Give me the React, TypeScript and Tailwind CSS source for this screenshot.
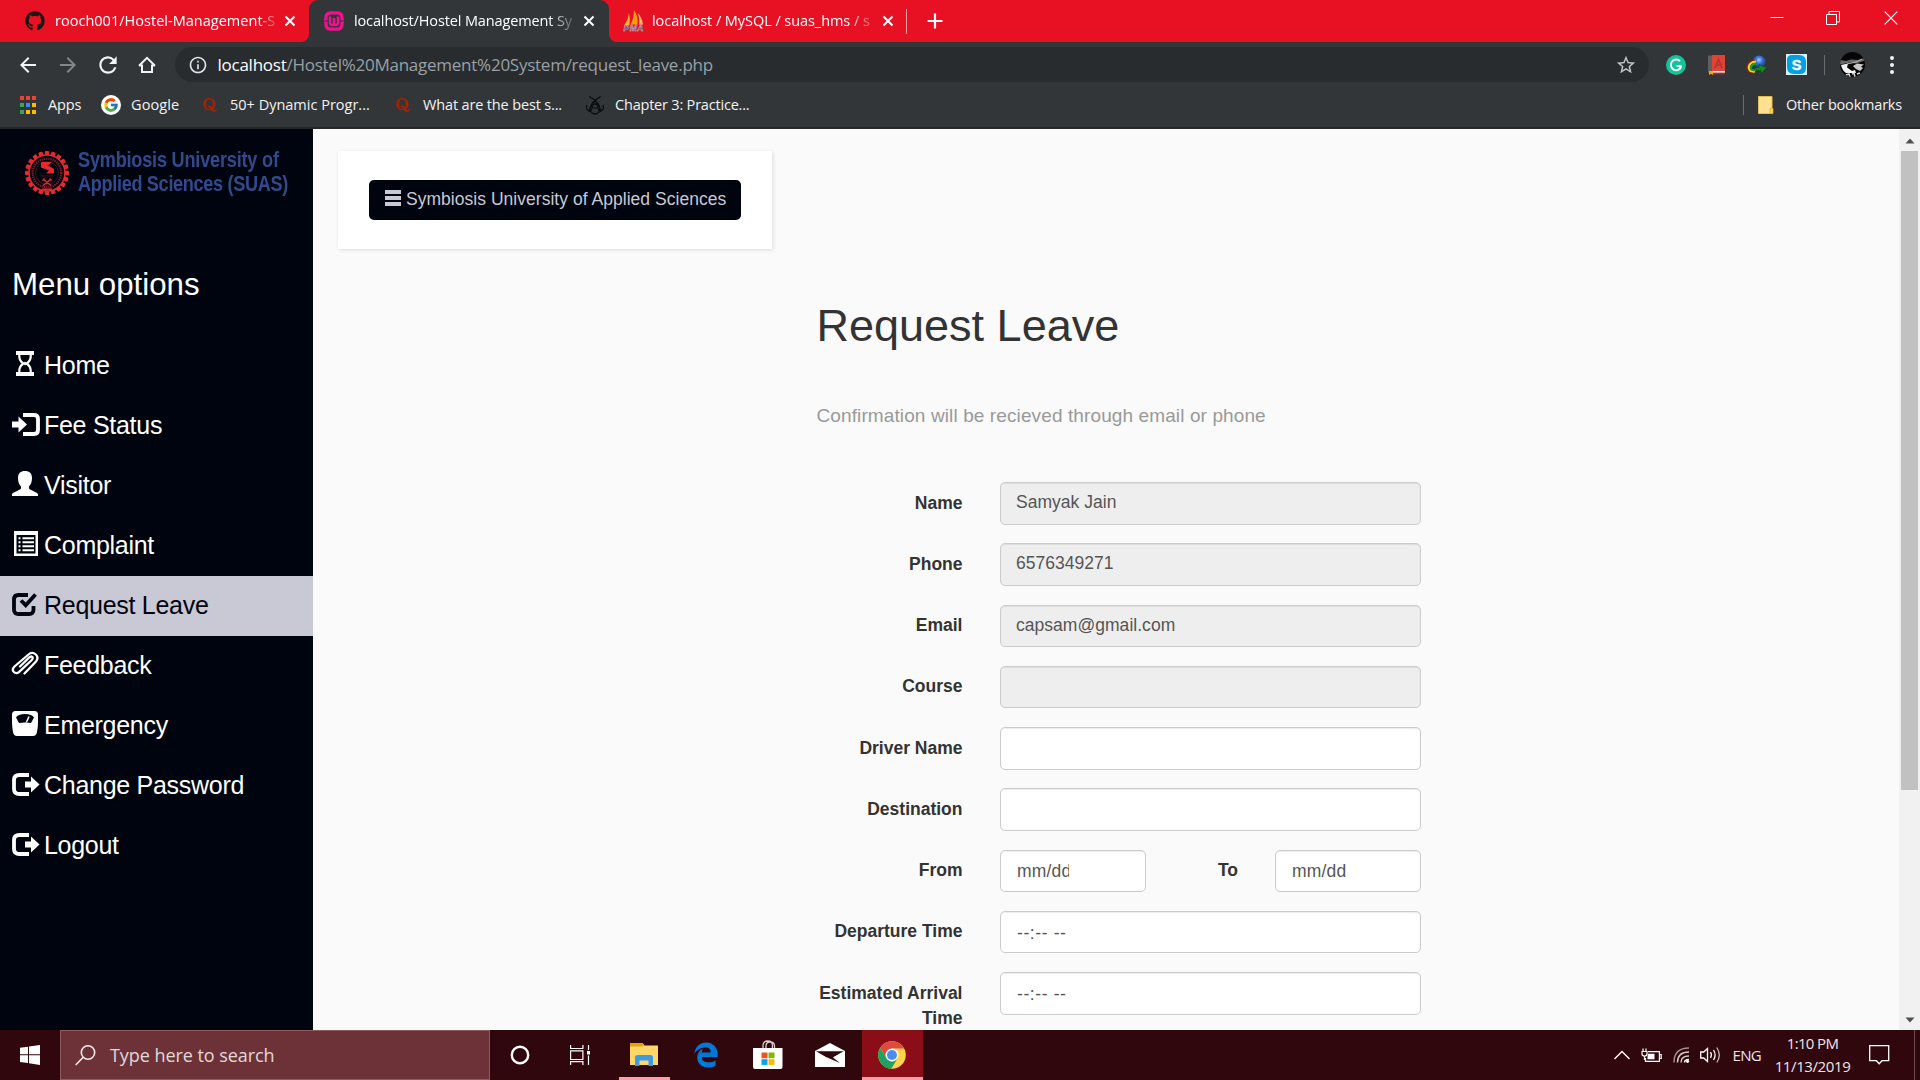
import React from "react";
import { FaGithub, FaQuora, FaEdgeLegacy } from "react-icons/fa";
import { FcGoogle } from "react-icons/fc";
import { MdArrowBack, MdArrowForward, MdRefresh, MdStarBorder, MdInfoOutline } from "react-icons/md";

const UI = "font-['Open_Sans','Noto_Sans',sans-serif]";
const ARIAL = "font-['Liberation_Sans',Arial,sans-serif]";

/* ---------- browser icons ---------- */

function TabClose() {
  return (
    <svg className="block h-[12px] w-[12px] shrink-0" viewBox="0 0 12 12">
      <path d="M1.5 1.5 10.5 10.5M10.5 1.5 1.5 10.5" stroke="#fff" strokeWidth="2" />
    </svg>
  );
}

function WampIcon() {
  return (
    <svg className="block h-5 w-5 shrink-0" viewBox="0 0 20 20" fill="none" stroke="#f80c93">
      <path d="M2 8V6.5Q2 1.800 7 1.800h6q5 0 5 4.700V8M2 12v1.500q0 4.700 5 4.700h6q5 0 5-4.700V12" strokeWidth="3.200" />
      <path d="M0 8.700h3.500M16.500 8.700H20M0 11.300h3.500M16.500 11.300H20" strokeWidth="1.400" />
      <path d="M6 5.500v6q0 2.500 2 2.500t2-2.500V7v4.500q0 2.500 2 2.500t2-2.500v-6" strokeWidth="2.400" />
    </svg>
  );
}

function PmaIcon() {
  return (
    <svg className="block h-[22px] w-[22px] shrink-0" viewBox="0 0 22 22">
      <path d="M1.500 15Q5.500 9 6 3q1.500 6 .5 12z" fill="#f6b02c" />
      <path d="M7.500 14.500Q11 8 11 0q4.500 7 3.500 14.500z" fill="#f89c0e" />
      <path d="M16 14.500q1-6-1.500-11.500Q19 7 20 14.500z" fill="#fbb968" />
      <text x="0.500" y="20.500" fontSize="8.500" fontWeight="bold" fontStyle="italic" fontFamily="Liberation Sans" fill="#4d4a7c" stroke="#e8d9dd" strokeWidth="0.350" textLength="20">PMA</text>
    </svg>
  );
}

function HomeOutline() {
  return (
    <svg className="block h-5 w-5" viewBox="0 0 20 20" fill="none" stroke="#f1f3f4" strokeWidth="2">
      <path d="M5 9.500V17h10V9.500" />
      <path d="M2 10.700 10 2.800 18 10.700" />
      <path d="M2.500 10.500H5M15 10.500h2.500" />
    </svg>
  );
}

const APP_COLORS = ["#ea4335", "#ea4335", "#ea4335", "#34a853", "#4285f4", "#fbbc05", "#34a853", "#fbbc05", "#fbbc05"];

function AppsIcon() {
  return (
    <span className="grid grid-cols-3 gap-x-[2px] gap-y-[3px]">
      {APP_COLORS.map((c, i) => (
        <span key={i} className="h-[4px] w-[4px]" style={{ backgroundColor: c }} />
      ))}
    </span>
  );
}

function ChapterIcon() {
  return (
    <svg className="block h-5 w-5" viewBox="0 0 20 20" fill="none" stroke="#0c0d0e" strokeWidth="1.300">
      <path d="M4.500 1q1 2 3 2.500Q13 7 14 11t2 6M15.500 1q-1 2-3 2.500Q7 7 6 11t-2 6" />
      <path d="M10 5 5.500 17M10 5l4.500 12M7 13h6" strokeWidth="1" />
      <circle cx="10" cy="14" r="5" />
      <path d="M2 10q-2 5 3 6M18 10q2 5-3 6" />
    </svg>
  );
}

function Grammarly() {
  return (
    <svg className="block h-5 w-5" viewBox="0 0 20 20">
      <circle cx="10" cy="10" r="10" fill="#15c39a" />
      <path d="M14 6.200A5.300 5.300 0 1 0 15.200 11.500" fill="none" stroke="#fff" strokeWidth="1.900" />
      <path d="M10.500 11.200h5.300M15 11.200l-1.500 3" fill="none" stroke="#fff" strokeWidth="1.800" />
    </svg>
  );
}

function BookIcon() {
  return (
    <svg className="block h-5 w-[17px]" viewBox="0 0 17 20">
      <rect x="0" y="0.500" width="5" height="17" fill="#5b6065" />
      <rect x="4" y="0" width="13" height="16" fill="#dc4437" />
      <rect x="4" y="16" width="13" height="1.800" fill="#f3e9e6" />
      <rect x="1" y="17.800" width="16" height="1.500" fill="#b3271e" />
      <path d="M1 16h4v4l-2-1.300L1 20z" fill="#e8a91c" />
      <path d="M7 13 10.500 4.500 14 13M8.300 10h4.400" fill="none" stroke="#b8312a" strokeWidth="1.700" />
    </svg>
  );
}

function DownloadManagerIcon() {
  return (
    <svg className="block h-5 w-[21px]" viewBox="0 0 21 20">
      <defs>
        <radialGradient id="globe" cx="0.500" cy="0.350" r="0.700">
          <stop offset="0" stopColor="#b4ccff" />
          <stop offset="0.350" stopColor="#3b74dd" />
          <stop offset="1" stopColor="#0d2963" />
        </radialGradient>
      </defs>
      <circle cx="13" cy="7" r="6.500" fill="url(#globe)" />
      <path d="M9 5Q1.500 6 1 12t7 6" fill="none" stroke="#8c2015" strokeWidth="1.600" />
      <path d="M10 6.500Q3.500 7 2.800 12T9 16.500" fill="none" stroke="#f3d522" strokeWidth="2.200" />
      <path d="M11 8.500q-5.500.500-6 4t5 2.500" fill="none" stroke="#229a26" strokeWidth="2.200" />
      <path d="M8.500 13q3-1 4.500-.5V9.500L20.500 12.500l-5 6-.8-3Q11 17 8.500 13z" fill="#168a1c" stroke="#0b480f" strokeWidth="0.600" />
    </svg>
  );
}

function SkypeIcon() {
  return (
    <svg className="block h-[21px] w-[21px]" viewBox="0 0 21 21">
      <rect width="21" height="21" fill="#dfeef6" />
      <path d="M6 1h7q7 0 7 7v6q0 6-6 6H8q-7 0-7-7V6q0-5 5-5z" fill="#00a1e3" />
      <text x="10.500" y="15.600" fontSize="14.500" fontWeight="bold" fontFamily="Liberation Sans" fill="#fff" stroke="#fff" strokeWidth="0.400" textAnchor="middle">S</text>
    </svg>
  );
}

function Avatar() {
  return (
    <svg className="block h-[25px] w-[25px]" viewBox="0 0 25 25">
      <clipPath id="face"><circle cx="12.500" cy="12.500" r="12.500" /></clipPath>
      <g clipPath="url(#face)">
        <rect width="25" height="25" fill="#060606" />
        <path d="M0 8l6 1 5-1.500 7 .5 7-2v2.500l-9 3-6-1-10 2z" fill="#6a6a6a" />
        <path d="M1 13l7-1.500-1 4 5 3.500 3-1 1 3H6q-4-3-5-8z" fill="#f4f4f4" />
        <path d="M13 14l4-2.500 7 1-3 2 2 1.500-3 3-4-2z" fill="#c8c8c8" />
        <path d="M6 23l3-1 1 3M12 22l2-1 1 4M17 22l3-1" fill="none" stroke="#d8d8d8" strokeWidth="1.500" />
        <path d="M7 12l9-2 6-3" fill="none" stroke="#b5b5b5" strokeWidth="1" />
      </g>
    </svg>
  );
}

function FolderIcon() {
  return (
    <svg className="block h-[18px] w-[16px]" viewBox="0 0 16 18">
      <path d="M.5.500H14V17.500H.5z" fill="#fee292" stroke="#e3bd55" />
      <path d="M12 12.500h3v5h-3z" fill="#fdd45c" stroke="#dcae35" strokeWidth="0.800" />
    </svg>
  );
}

/* ---------- browser chrome ---------- */

function TabBar() {
  return (
    <div className="flex h-[42px] bg-[#e81123] text-[14.5px] leading-[40px] text-white">
      <div className="flex w-[309px] items-center bg-[#323639]">
        <div className="flex h-[42px] w-full items-center rounded-br-[8px] bg-[#e81123] pl-[25px]">
          <FaGithub className="h-5 w-5 shrink-0 text-[#1b1719]" />
          <span className="ml-[10px] w-[223px] whitespace-nowrap tracking-[0.02px] [mask-image:linear-gradient(to_right,#000_91%,transparent_101%)]">rooch001/Hostel-Management-S</span>
          <span className="ml-[6px]"><TabClose /></span>
        </div>
      </div>
      <div className="flex w-[300px] bg-[#e81123]">
        <div className="flex h-[42px] w-full items-center rounded-t-[9px] bg-[#323639] pl-[15px]">
          <WampIcon />
          <span className="ml-[10px] w-[223px] whitespace-nowrap tracking-[-0.13px] [mask-image:linear-gradient(to_right,#000_87%,transparent_101%)]">localhost/Hostel Management Sy</span>
          <span className="ml-[6px]"><TabClose /></span>
        </div>
      </div>
      <div className="flex flex-1 bg-[#323639]">
        <div className="flex h-[42px] w-full items-center rounded-bl-[8px] bg-[#e81123] pl-[14px]">
          <PmaIcon />
          <span className="ml-[7px] w-[223px] whitespace-nowrap tracking-[-0.06px] [mask-image:linear-gradient(to_right,#000_88%,transparent_102%)]">localhost / MySQL / suas_hms / s</span>
          <span className="ml-[7px]"><TabClose /></span>
          <span className="ml-[12px] h-[25px] w-px bg-[#f4a0a7]" />
          <svg className="ml-[20px] block h-4 w-4" viewBox="0 0 16 16">
            <path d="M8 .5v15M.5 8h15" stroke="#fff" strokeWidth="2.200" />
          </svg>
          <svg className="mb-[8px] ml-auto block h-[14px] w-[14px]" viewBox="0 0 14 14">
            <path d="M.5 7.500h13" stroke="#fff" />
          </svg>
          <svg className="mb-[6px] ml-[42px] block h-[14px] w-[14px]" viewBox="0 0 14 14" fill="none" stroke="#fff">
            <path d="M.5 3.500h10v10H.5zM3 3V.500h10.500v10.500H11" />
          </svg>
          <svg className="mb-[6px] ml-[44px] mr-[22px] block h-[14px] w-[14px]" viewBox="0 0 14 14">
            <path d="M.7.700 13.300 13.300M13.300.700.700 13.300" stroke="#fff" strokeWidth="1.200" />
          </svg>
        </div>
      </div>
    </div>
  );
}

function AddressBar() {
  return (
    <div className="flex h-[45px] items-center bg-[#323639] pl-[15.5px]">
      <MdArrowBack className="h-6 w-6 text-[#f1f3f4]" />
      <MdArrowForward className="ml-4 h-6 w-6 text-[#83868a]" />
      <MdRefresh className="ml-[15px] h-[26px] w-[26px] text-[#f1f3f4]" />
      <span className="ml-4"><HomeOutline /></span>
      <div className="ml-[18.5px] flex h-[35px] w-[1474px] items-center rounded-full bg-[#282c2f] pl-[12.5px] pr-[12px]">
        <MdInfoOutline className="h-[20px] w-[20px] text-[#dfe1e3]" />
        <span className="ml-[10px] text-[17px] leading-[35px] tracking-[-0.25px] text-white">localhost<span className="text-[#9aa0a6]">/Hostel%20Management%20System/request_leave.php</span></span>
        <MdStarBorder className="ml-auto h-[22px] w-[22px] text-[#c3c6c9]" />
      </div>
      <span className="ml-[17px]"><Grammarly /></span>
      <span className="ml-[21.5px]"><BookIcon /></span>
      <span className="ml-[21px]"><DownloadManagerIcon /></span>
      <span className="ml-[19px]"><SkypeIcon /></span>
      <span className="ml-[17px] h-5 w-px bg-[#6b6e71]" />
      <span className="ml-[15px]"><Avatar /></span>
      <span className="ml-[25px] flex flex-col gap-[3px]">
        <span className="h-1 w-1 rounded-full bg-[#f1f3f4]" />
        <span className="h-1 w-1 rounded-full bg-[#f1f3f4]" />
        <span className="h-1 w-1 rounded-full bg-[#f1f3f4]" />
      </span>
    </div>
  );
}

function BookmarksBar() {
  return (
    <div className="flex h-[42px] items-center whitespace-nowrap border-b-2 border-[#25282a] bg-[#323639] pb-[4px] pl-[20px] text-[14.5px] leading-[20px] tracking-[-0.15px] text-[#f1f3f4]">
      <div className="flex w-[81px] items-center"><AppsIcon /><span className="ml-[12px]">Apps</span></div>
      <div className="flex w-[101px] items-center">
        <span className="flex h-5 w-5 items-center justify-center rounded-full bg-white"><FcGoogle className="h-4 w-4" /></span>
        <span className="ml-[10px] tracking-[0.1px]">Google</span>
      </div>
      <div className="flex w-[193px] items-center"><FaQuora className="h-[16px] w-[16px] text-[#a82100]" /><span className="ml-[12px] tracking-[0px]">50+ Dynamic Progr...</span></div>
      <div className="flex w-[190px] items-center"><FaQuora className="h-[16px] w-[16px] text-[#a82100]" /><span className="ml-[12px]">What are the best s...</span></div>
      <div className="flex items-center"><ChapterIcon /><span className="ml-[10px] tracking-[-0.2px]">Chapter 3: Practice...</span></div>
      <span className="ml-auto h-5 w-px bg-[#6b6e71]" />
      <span className="ml-[14px]"><FolderIcon /></span>
      <span className="ml-[12px] mr-[18px] tracking-[-0.2px]">Other bookmarks</span>
    </div>
  );
}

/* ---------- sidebar ---------- */

const TEETH = Array.from({ length: 20 }, (_, i) => i * 18);

function Crest() {
  return (
    <svg className="block h-[46px] w-[46px] shrink-0" viewBox="-23 -23 46 46">
      <g fill="#e8282f">
        {TEETH.map((a) => (
          <rect key={a} x="-2.200" y="-22" width="4.400" height="4" rx="1" transform={`rotate(${a})`} />
        ))}
      </g>
      <circle r="18" fill="none" stroke="#e8282f" strokeWidth="1.600" />
      <circle r="14.300" fill="none" stroke="#84202b" strokeWidth="2.200" strokeDasharray="1.300 0.900" />
      <circle r="11.500" fill="none" stroke="#5c141d" strokeWidth="0.800" />
      <path d="M-6-11H5l-4 3.500 6 3.500V.5H-1l3-3-8-3z" fill="#e8282f" />
      <path d="M-6 3H6" stroke="#5c141d" strokeWidth="0.800" />
      <path d="M-4 6 4 12.500M4 6l-8 6.500M-4.500 7.500-2.500 5.500M4.500 7.500 2.500 5.500" stroke="#e8282f" strokeWidth="1.400" />
      <path d="M-5 16.300H5" stroke="#e8282f" strokeWidth="1.600" />
    </svg>
  );
}

/* Menu glyphs share one drawing box: x 11-41, y 14-42 inside each 60px row. */
function Glyph({ children }: { children: React.ReactNode }) {
  return (
    <svg className="mt-[14px] block h-7 w-[30px] shrink-0" viewBox="11 14 30 28" fill="currentColor">
      {children}
    </svg>
  );
}

const hourglass = (
  <Glyph>
    <path d="M16 15h18v4H16zM16 36h18v4H16z" />
    <path d="M19.300 18v2.500q0 4 4 7-4 3-4 7V37M30.700 18v2.500q0 4-4 7 4 3 4 7V37" fill="none" stroke="currentColor" strokeWidth="2.200" />
    <path d="M23 27.500 25 25.500l2 2-2 2z" />
  </Glyph>
);
const logIn = (
  <Glyph>
    <path d="M12 25.500h6.500v-5l8.500 8-8.500 8v-5H12z" />
    <path d="M23 19h11q4 0 4 4v11q0 4-4 4H23" fill="none" stroke="currentColor" strokeWidth="3.800" />
  </Glyph>
);
const userGlyph = (
  <Glyph>
    <path d="M25 15c4.500 0 7 2.500 7 7 0 4-1.300 7-3 8.500v1.500c0 .7.500 1.200 1.200 1.600L37 37c.7.400 1 .9 1 1.500V40H12v-1.500c0-.6.300-1.100 1-1.500l6.800-3.400c.7-.4 1.200-.9 1.200-1.600v-1.500c-1.700-1.500-3-4.500-3-8.500 0-4.500 2.500-7 7-7z" />
  </Glyph>
);
const listAlt = (
  <Glyph>
    <path fillRule="evenodd" d="M14 15h24v25H14zM16.500 19v18.500h19V19z" />
    <path d="M18.500 22.300h2M22.500 22.300H34M18.500 26.300h2M22.500 26.300H34M18.500 30.300h2M22.500 30.300H34M18.500 34.300h2M22.500 34.300H34" stroke="currentColor" strokeWidth="2" />
  </Glyph>
);
const checkGlyph = (
  <Glyph>
    <path d="M28 19h-9.500q-4.500 0-4.500 4.500v10q0 4.500 4.500 4.500H29q4.500 0 4.500-4.500V30" fill="none" stroke="currentColor" strokeWidth="3.800" />
    <path d="M21 24.500l4.700 4.700L35.500 18.500" fill="none" stroke="currentColor" strokeWidth="3.800" />
  </Glyph>
);
const paperclip = (
  <Glyph>
    <path d="M24.500 37.500 36 25.500q3-3.700-.2-7-3.800-3.300-7.300 0L14.500 30.500q-3 3-.6 5.500 2.500 2.300 5.300-.2L31.500 24.300q2-2.300.7-3.300-1.200-1.200-3.200.7L20 30.500" fill="none" stroke="currentColor" strokeWidth="2.300" strokeLinecap="round" />
  </Glyph>
);
const scale = (
  <Glyph>
    <path fillRule="evenodd" d="M15.500 15h19Q38 15 38 18.500v8q0 4-1 9.500-.7 4-4 4H17q-3.300 0-4-4-1-5.500-1-9.500v-8Q12 15 15.500 15zM16 21.500l3 5.500q6-1 12 0l3-5.500Q32 18 25 18t-9 3.500z" />
    <path d="M26.300 26.500 29 20.500" stroke="currentColor" strokeWidth="1.500" />
  </Glyph>
);
const logOut = (
  <Glyph>
    <path d="M25 25.500h6v-5l8.500 8-8.500 8v-5h-6z" />
    <path d="M29 19h-9.500q-5.500 0-5.500 5v9q0 5 5.500 5H29" fill="none" stroke="currentColor" strokeWidth="3.800" />
  </Glyph>
);

const MENU: { label: string; icon: React.ReactNode; active?: boolean }[] = [
  { label: "Home", icon: hourglass },
  { label: "Fee Status", icon: logIn },
  { label: "Visitor", icon: userGlyph },
  { label: "Complaint", icon: listAlt },
  { label: "Request Leave", icon: checkGlyph, active: true },
  { label: "Feedback", icon: paperclip },
  { label: "Emergency", icon: scale },
  { label: "Change Password", icon: logOut },
  { label: "Logout", icon: logOut },
];

function Sidebar() {
  return (
    <aside className="w-[313px] shrink-0 bg-[#00040f]">
      <div className="flex h-[88px] items-center pl-[24px]">
        <Crest />
        <div className="mb-[3px] ml-[8px] w-[230px] origin-left scale-x-[0.805] whitespace-nowrap text-[22.5px] font-bold leading-[23.500px] text-[#304a8c]">
          <p className="tracking-[-0.25px]">Symbiosis University of</p>
          <p className="tracking-[-0.4px]">Applied Sciences (SUAS)</p>
        </div>
      </div>
      <h3 className="pl-[12px] pt-[48px] text-[31.25px] leading-[40px] text-white">Menu options</h3>
      <ul className="pt-[31px]">
        {MENU.map((m) => (
          <li
            key={m.label}
            className={
              m.active
                ? "flex h-[60px] bg-[#c9c8d5] pl-[11px] text-[#00040f]"
                : "flex h-[60px] pl-[11px] text-white"
            }
          >
            {m.icon}
            <span className="ml-[3px] text-[25px] leading-[59px] tracking-[-0.28px]">{m.label}</span>
          </li>
        ))}
      </ul>
    </aside>
  );
}

/* ---------- form ---------- */

const BOX =
  "h-[42.5px] rounded-[5px] border border-[#ccc] px-[15px] text-[17.5px] text-[#555] shadow-[inset_0_1px_1px_rgba(0,0,0,0.075)]";

function Row({ label, children }: { label: string; children: React.ReactNode }) {
  return (
    <div className="flex h-[42.5px] items-start">
      <span className="w-[145.5px] pt-[8.5px] text-right text-[17.5px] font-bold leading-[25px] text-[#333]">{label}</span>
      <div className="ml-[37.5px] flex w-[421px]">{children}</div>
    </div>
  );
}

function Field({ value = "", readOnly, time }: { value?: string; readOnly?: boolean; time?: boolean }) {
  return (
    <div
      className={`${BOX} flex-1 ${readOnly ? "bg-[#eee]" : "bg-white"} ${
        time ? "leading-[42px] tracking-[0.6px]" : "leading-[39.5px] tracking-[0.03px]"
      }`}
    >
      <span className={time ? "pl-px" : ""}>{value}</span>
    </div>
  );
}

/* Each date input is too narrow for its full pattern; the text box cuts it off. */
function DateField({ clip }: { clip: "narrow" | "wide" }) {
  return (
    <div className={`${BOX} w-[146px] bg-white leading-[41px]`}>
      <span
        className={
          clip === "narrow"
            ? "ml-px block w-[52px] overflow-hidden tracking-[0.2px]"
            : "ml-px block w-[54px] overflow-hidden tracking-[0.2px]"
        }
      >
        mm/dd
      </span>
    </div>
  );
}

function LeaveForm() {
  return (
    <section className="ml-[504px] mt-[52px] w-[604px]">
      <h1 className="-ml-[0.5px] text-[45px] leading-[50px] text-[#333]">Request Leave</h1>
      <p className="-ml-[0.5px] mt-[51px] whitespace-nowrap text-[19px] leading-[27px] tracking-[0.11px] text-[#999]">Confirmation will be recieved through email or phone</p>
      <div className="mt-[53px] flex flex-col gap-[18.750px]">
        <Row label="Name"><Field value="Samyak Jain" readOnly /></Row>
        <Row label="Phone"><Field value="6576349271" readOnly /></Row>
        <Row label="Email"><Field value="capsam@gmail.com" readOnly /></Row>
        <Row label="Course"><Field readOnly /></Row>
        <Row label="Driver Name"><Field /></Row>
        <Row label="Destination"><Field /></Row>
        <Row label="From">
          <DateField clip="narrow" />
          <span className="flex-1 pr-[37px] pt-[8.5px] text-right text-[17.5px] font-bold leading-[25px] text-[#333]">To</span>
          <DateField clip="wide" />
        </Row>
        <Row label="Departure Time"><Field value="--:-- --" time /></Row>
        <Row label="Estimated Arrival Time"><Field value="--:-- --" time /></Row>
      </div>
    </section>
  );
}

function Scrollbar() {
  return (
    <div className="flex w-[21px] shrink-0 flex-col items-center bg-[#f1f1f1]">
      <svg className="mt-[9px] block h-[6px] w-[10px]" viewBox="0 0 10 6"><path d="M5 .5 9.500 5.500h-9z" fill="#505050" /></svg>
      <div className="mt-[7px] h-[639px] w-[17px] bg-[#c1c1c1]" />
      <svg className="mb-[7px] mt-auto block h-[6px] w-[10px]" viewBox="0 0 10 6"><path d="M.5.500h9L5 5.500z" fill="#505050" /></svg>
    </div>
  );
}

/* ---------- taskbar ---------- */

function TaskButton({ children, running, active }: { children: React.ReactNode; running?: boolean; active?: boolean }) {
  return (
    <div className={`flex h-[50px] flex-col items-center ${active ? "w-[61px] bg-[#8b0d17]" : "w-[51px]"}`}>
      <span className="flex h-[47px] flex-1 items-center justify-center">{children}</span>
      {running && <span className="h-[3px] w-full bg-[#ff9ea8]" />}
    </div>
  );
}

function Taskbar() {
  return (
    <footer className={`flex h-[50px] bg-[#30070c] ${UI}`}>
      <div className="flex w-[60px] items-center justify-center">
        <svg className="block h-5 w-5" viewBox="0 0 20 20" fill="#fff">
          <path d="M0 2.800 8 1.700v7.600H0zM9 1.500 20 0v9.300H9zM0 10.300h8v7.800L0 17zM9 10.300h11V20L9 18.300z" />
        </svg>
      </div>
      <div className="flex w-[430px] items-center border border-[#8d5b60] bg-[#6c3237] pl-[14px]">
        <svg className="block h-[21px] w-[21px]" viewBox="0 0 21 21" fill="none" stroke="#f2ebec" strokeWidth="1.600">
          <circle cx="13" cy="7.500" r="6.700" />
          <path d="M8.200 12.300.700 20" />
        </svg>
        <span className="ml-[14px] text-[18px] leading-[48px] tracking-[-0.06px] text-[#e3d8da]">Type here to search</span>
      </div>
      <div className="flex w-[60px] items-center justify-center">
        <svg className="block h-5 w-5" viewBox="0 0 20 20"><circle cx="10" cy="10" r="8.200" fill="none" stroke="#fff" strokeWidth="2.400" /></svg>
      </div>
      <div className="flex w-[60px] items-center justify-center">
        <svg className="block h-5 w-5" viewBox="0 0 20 20" fill="none" stroke="#fff" strokeWidth="1.200">
          <path d="M.6 0v3.500h12.300V0M.6 5.800h12.300v8.700H.6zM.6 20v-3.300h12.300V20M18.500 0v5M18.500 10.500V20" />
          <path d="M17 6h3v3.500h-3z" fill="#fff" stroke="none" />
        </svg>
      </div>
      <div className="ml-[9px] flex">
        <TaskButton running>
          <svg className="mr-[2px] block h-6 w-7" viewBox="0 0 28 24">
            <path d="M0 1h12.500l2 2.500H28V23H0z" fill="#ffd768" />
            <path d="M0 1h12.500l1.500 2-1.500 1.500H0z" fill="#e8a30c" />
            <path d="M5 24v-8.500q0-2.500 2.500-2.500h13q2.500 0 2.500 2.500V24h-4.500v-5.500h-9V24z" fill="#3f9be0" />
          </svg>
        </TaskButton>
      </div>
      <div className="ml-[11px] flex"><TaskButton><FaEdgeLegacy className="mr-px h-[28px] w-[26px] text-[#0078d7]" /></TaskButton></div>
      <div className="ml-[10px] flex">
        <TaskButton>
          <svg className="block h-[30px] w-[30px]" viewBox="0 0 30 30">
            <path d="M10 8V5.500Q10 1 14.700 1t4.700 4.500V8M13 8V6q0-4 4-4 4.500 0 4.500 4v2" fill="none" stroke="#d9cfd0" strokeWidth="1.300" />
            <path d="M0 8h29.500v19q0 2-2 2H2q-2 0-2-2z" fill="#fff" />
            <path d="M8.500 12.500h6v5.700h-6z" fill="#f25022" /><path d="M15.500 12.500h6v5.700h-6z" fill="#7fba00" />
            <path d="M8.500 19.200h6v5.700h-6z" fill="#00a4ef" /><path d="M15.500 19.200h6v5.700h-6z" fill="#ffb900" />
          </svg>
        </TaskButton>
      </div>
      <div className="ml-[12px] flex">
        <TaskButton>
          <svg className="mr-[2px] block h-6 w-[30px]" viewBox="0 0 30 24">
            <path d="M0 8 15 0l15 8v16H0z" fill="#fff" />
            <path d="M1 8.300h28L18 14.500l7 5.500L11 14z" fill="#30070c" />
            <path d="M18 14.500 29 8.300v5z" fill="#fff" />
          </svg>
        </TaskButton>
      </div>
      <div className="ml-[6px] flex">
        <TaskButton running active>
          <svg className="mr-px mt-[3px] block h-7 w-7" viewBox="-14 -14 28 28">
            <circle r="13.800" fill="#ffd24c" />
            <path d="M0-6.500H12.200A13.800 13.800 0 0 0-11.900-7L-5.600 3.200z" fill="#dd4b3e" />
            <path d="M-11.900-7A13.800 13.800 0 0 0-.700 13.800L5.600 3.200 0 6.500-5.600 3.200z" fill="#1da261" />
            <circle r="6.500" fill="#fff" />
            <circle r="5" fill="#4c8bf5" />
          </svg>
        </TaskButton>
      </div>
      <div className="ml-auto flex items-center text-[15px] text-[#ece6e7]">
        <svg className="block h-[10px] w-[16px]" viewBox="0 0 16 10"><path d="M.5 9 8 1.500 15.500 9" fill="none" stroke="#fff" strokeWidth="1.400" /></svg>
        <svg className="ml-[11px] block h-[15px] w-[21px]" viewBox="0 0 21 15" fill="none" stroke="#fff" strokeWidth="1.200">
          <path d="M7 3.600h11.400v9.800H4.500V10M19 6.500h1.200v4H19" />
          <path d="M7 5.800h6.500v5.400H6.500V9z" fill="#fff" stroke="none" />
          <path d="M1 3.500h5v2.500Q6 8 3.500 8T1 6zM2 3.500V.500M5 3.500V.500M3.500 8v4" />
        </svg>
        <svg className="ml-[11px] block h-[16px] w-[17px]" viewBox="0 0 17 16" fill="none" strokeWidth="1.400">
          <path d="M1 15.500Q1 1 16 1" stroke="#a58e91" />
          <path d="M4.500 15.500Q4.500 5 16 5M8 15.500Q8 9 16 9" stroke="#d5c9cb" />
          <path d="M11.500 15.500Q11.500 12.500 16 12.500" stroke="#fff" />
          <circle cx="14.500" cy="14.300" r="1.600" fill="#fff" />
        </svg>
        <svg className="ml-[10px] block h-[18px] w-[21px]" viewBox="0 0 21 18" fill="none" stroke="#fff" strokeWidth="1.300">
          <path d="M.7 6h3L7.500 2.500v13L3.700 12h-3z" />
          <path d="M10.500 6.200q1.800 2.800 0 5.600M13.500 4q3.200 5 0 10" />
          <path d="M16.800 1.500q5 7.500 0 15" stroke="#c5b7b9" />
        </svg>
        <span className="ml-[12px] tracking-[-0.7px]">ENG</span>
        <div className="ml-[13px] w-[77px] text-center leading-[23px]">
          <p className="tracking-[-0.65px]">1:10 PM</p>
          <p className="tracking-[-0.4px]">11/13/2019</p>
        </div>
        <svg className="ml-[18px] block h-[20px] w-[21px]" viewBox="0 0 21 20" fill="none" stroke="#fff" strokeWidth="1.300">
          <path d="M.7.700h19v15H13L10.200 18.700 7.400 15.700H.7z" />
        </svg>
        <span className="ml-[24px] mr-[5px] h-[50px] w-px bg-[#6d4c50]" />
      </div>
    </footer>
  );
}

export default function App() {
  return (
    <div className="flex h-[1080px] w-[1920px] flex-col overflow-hidden bg-[#fafafa]">
      <header className={`shrink-0 ${UI}`}>
        <TabBar />
        <AddressBar />
        <BookmarksBar />
      </header>
      <div className={`flex h-[901px] shrink-0 overflow-hidden ${ARIAL}`}>
        <Sidebar />
        <main className="flex-1 overflow-hidden bg-[#fafafa]">
          <div className="ml-[25px] mt-[22px] flex h-[98px] w-[434px] items-center justify-center bg-white shadow-[1px_1px_4px_rgba(0,0,0,0.12)]">
            <button className="flex h-[40px] w-[372px] items-start rounded-[5px] bg-[#00040f] pl-[16px] text-[#c9c8d5]">
              <svg className="mt-[10px] block h-4 w-4" viewBox="0 0 16 16" fill="currentColor">
                <path d="M0 0h16v4H0zM0 6h16v4H0zM0 12h16v4H0z" />
              </svg>
              <span className="ml-[5px] whitespace-nowrap text-[17.5px] leading-[38px] tracking-[0.03px]">Symbiosis University of Applied Sciences</span>
            </button>
          </div>
          <LeaveForm />
        </main>
        <Scrollbar />
      </div>
      <Taskbar />
    </div>
  );
}
